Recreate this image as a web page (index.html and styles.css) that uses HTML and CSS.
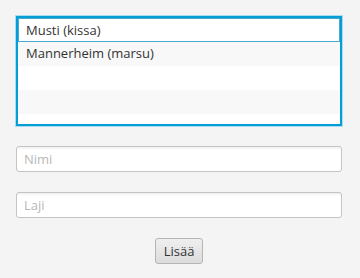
FILE: index.html
```html
<!DOCTYPE html>
<html lang="fi">
  <head>
    <meta charset="UTF-8" />
    <meta name="viewport" content="width=device-width, initial-scale=1.0" />
    <title>Lemmikit</title>
    <link rel="stylesheet" href="styles.css">
  </head>
  <body>
    <div class="app">
      <ul class="pets">
        <li class="pet focused">Musti (kissa)</li>
        <li class="pet">Mannerheim (marsu)</li>
        <li class="pet"></li>
        <li class="pet"></li>
        <li class="pet"></li>
      </ul>

      <input type="text" class="field" id="name" placeholder="Nimi" />
      <input type="text" class="field" id="kind" placeholder="Laji" />

      <div class="actions">
        <button class="add">Lisää</button>
      </div>
    </div>
  </body>
</html>
```

FILE: styles.css
```css
body {
  font-family: "Open Sans", "Noto Sans", sans-serif;
  font-size: 13px;
  color: #333;
  margin: 0;
  background-color: #f4f4f4;
}
.app {
  display: flex;
  flex-direction: column;
  gap: 20px;
  padding: 16px 18px 16px 16px;
}
.pets {
  list-style: none;
  margin: 0;
  padding: 0;
  height: 106px;
  overflow: hidden;
  border: 2px solid #039ed3;
  box-shadow: 0 0 0 1px #a9dcf0;
  background-color: #fff;
}
.pet {
  height: 24px;
  line-height: 23px;
  padding: 0 8px;
  box-sizing: border-box;
}
.pet:nth-child(even) {
  background-color: #f8f8f8;
}
.pet.focused {
  border: 1px solid #4aa9d0;
  padding: 0 7px;
}
.field {
  font-family: inherit;
  font-size: 13px;
  color: #333;
  height: 26px;
  padding: 0 7px;
  margin: 0;
  width: 100%;
  box-sizing: border-box;
  border: 1px solid #c4c4c4;
  border-radius: 3px;
  background: linear-gradient(#f0f0f0, #fff 3px);
  outline: none;
}
.field::placeholder {
  color: #b8b8b8;
}
.actions {
  display: flex;
  justify-content: center;
}
.add {
  font-family: inherit;
  font-size: 13px;
  color: #333;
  height: 26px;
  padding: 0 8px;
  border: 1px solid #b5b5b5;
  border-radius: 3px;
  background: linear-gradient(#efefef, #dcdcdc);
  cursor: pointer;
}
```
